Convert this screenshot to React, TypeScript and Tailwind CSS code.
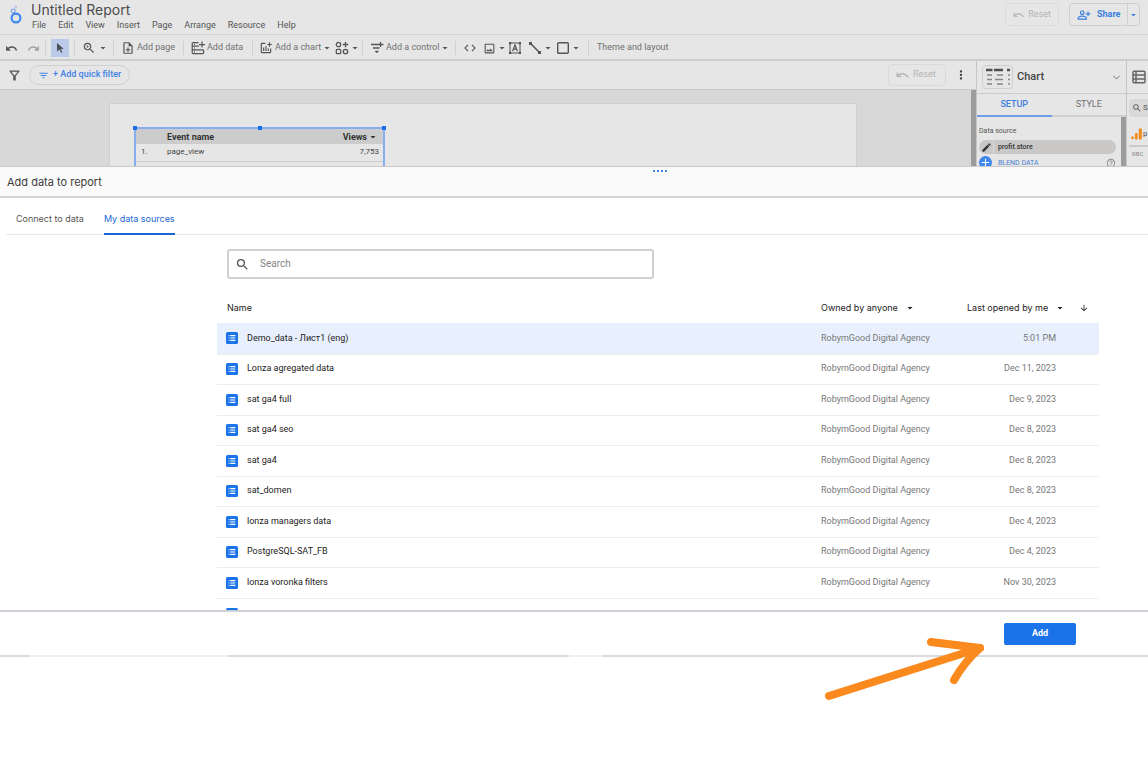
import React, { useState } from 'react';
import {
  MdAdd,
  MdArrowDownward,
  MdArrowDropDown,
  MdCode,
  MdEdit,
  MdFilterList,
  MdHelpOutline,
  MdMoreVert,
  MdOutlineAddchart,
  MdOutlineFilterAlt,
  MdOutlineImage,
  MdOutlineNoteAdd,
  MdOutlinePersonAddAlt,
  MdRedo,
  MdSearch,
  MdUndo,
  MdZoomIn,
} from 'react-icons/md';
import { ChevronDown } from 'lucide-react';

const menuItems = ['File', 'Edit', 'View', 'Insert', 'Page', 'Arrange', 'Resource', 'Help'];

const dataSources = [
  { name: 'Demo_data - Лист1 (eng)', opened: '5:01 PM' },
  { name: 'Lonza agregated data', opened: 'Dec 11, 2023' },
  { name: 'sat ga4 full', opened: 'Dec 9, 2023' },
  { name: 'sat ga4 seo', opened: 'Dec 8, 2023' },
  { name: 'sat ga4', opened: 'Dec 8, 2023' },
  { name: 'sat_domen', opened: 'Dec 8, 2023' },
  { name: 'lonza managers data', opened: 'Dec 4, 2023' },
  { name: 'PostgreSQL-SAT_FB', opened: 'Dec 4, 2023' },
  { name: 'lonza voronka filters', opened: 'Nov 30, 2023' },
];

const Logo = () => (
  <svg className="w-4 h-5" viewBox="0 0 16 20" fill="none" stroke="#3f86f0">
    <circle cx="9" cy="14" r="4.4" strokeWidth="2.2" />
    <circle cx="6.2" cy="7" r="1.9" strokeWidth="1.2" stroke="#7fa6e8" />
    <circle cx="8.6" cy="3.2" r="1" strokeWidth="0.9" stroke="#9fb8e6" />
    <path d="M6.8 8.8l.8 1.4" strokeWidth="1.4" />
  </svg>
);

const AddDataIcon = () => (
  <svg className="w-[14px] h-[14px]" viewBox="0 0 14 14" fill="none" stroke="currentColor" strokeWidth="1.2">
    <path d="M7.5 1.6H2.2a1 1 0 0 0-1 1v9a1 1 0 0 0 1 1h9.4a1 1 0 0 0 1-1V8.9M1.2 5.2h6.6M1.2 8.9h11.4M11 .6v6M8 3.6h6" />
    <path d="M3 3.4h1M3 7h1M3 10.8h1" />
  </svg>
);

const CommunityIcon = () => (
  <svg className="w-[14px] h-[14px]" viewBox="0 0 14 14" fill="none" stroke="currentColor" strokeWidth="1.3">
    <circle cx="3.5" cy="3.5" r="2.2" />
    <path d="M10.500 .8v5.400M7.800 3.500h5.400" />
    <rect x="1.300" y="8.300" width="4.400" height="4.400" rx="1" />
    <circle cx="10.5" cy="10.5" r="2.2" />
  </svg>
);

const ControlIcon = () => (
  <svg className="w-[14px] h-[14px]" viewBox="0 0 14 14" fill="none" stroke="currentColor" strokeWidth="1.3">
    <path d="M1 3.500h7M3 7h6.500M10.500 1v5M8 3.5h5.5" />
    <path d="M5 10h3.600L6.800 12z" fill="currentColor" strokeWidth="0.5" />
  </svg>
);

const TextIcon = () => (
  <svg className="w-[14px] h-[14px]" viewBox="0 0 14 14" fill="none" stroke="currentColor">
    <rect x="2" y="2" width="10" height="10" strokeWidth="1" />
    <path d="M4.6 10.2L7 4l2.4 6.2M5.4 8.2h3.2" strokeWidth="1.2" />
    <path d="M1 1h2.2v2.2H1zM10.8 1H13v2.2h-2.2zM1 10.8h2.2V13H1zM10.8 10.8H13V13h-2.2z" fill="currentColor" stroke="none" />
  </svg>
);

const LineIcon = () => (
  <svg className="w-[14px] h-[14px]" viewBox="0 0 14 14" stroke="currentColor" fill="currentColor">
    <path d="M2.5 2.5l9 9" strokeWidth="1.6" />
    <path d="M1 1h3v3H1zM10 10h3v3h-3z" stroke="none" />
  </svg>
);

const SquareIcon = () => (
  <svg className="w-[14px] h-[14px]" viewBox="0 0 14 14" fill="none" stroke="currentColor" strokeWidth="1.4">
    <rect x="1.7" y="1.7" width="10.6" height="10.6" rx="1" />
  </svg>
);

const PointerIcon = () => (
  <svg className="w-2 h-[10px]" viewBox="0 0 8 10" fill="#4a4f57">
    <path d="M1 0l6.6 5.8-2.9.2 1.6 3.2-1.2.6-1.6-3.3L1 8.4z" />
  </svg>
);

const ResetIcon = () => (
  <svg className="w-[13px] h-[10px]" viewBox="0 0 13 10" fill="none" stroke="currentColor" strokeWidth="1.3">
    <path d="M1.2 2.4v4h4M1.6 6C4 3 9.500 2.600 12 7.400" />
  </svg>
);

const TableThumb = () => (
  <svg className="w-6 h-[18px]" viewBox="0 0 24 18" fill="none" stroke="#858585" strokeWidth="1.4">
    <path d="M0 2h6.500M8 2h9M21 2h3" stroke="#4f4f4f" strokeWidth="2.600" />
    <path d="M1 7h5M11 7h6M22 7h2M1 11.500h5M9 11.500h8M22 11.500h2M1 16h5M11 16h6M22 16h2" />
  </svg>
);

const FieldsIcon = () => (
  <svg className="w-[14px] h-[14px] shrink-0" viewBox="0 0 14 14" fill="none" stroke="#666" strokeWidth="1.500">
    <rect x="1" y="1.200" width="12" height="11.600" rx="1" />
    <path d="M1 5h12M1 9h12M4 1v12" />
  </svg>
);

const AnalyticsIcon = () => (
  <svg className="w-[11px] h-3 shrink-0" viewBox="0 0 12 12" fill="#f28a1c">
    <circle cx="1.700" cy="10.200" r="1.600" />
    <rect x="4.300" y="5" width="3" height="7" rx="1" />
    <rect x="8.500" y="0" width="3.300" height="12" rx="1" />
  </svg>
);

const SourceIcon = () => (
  <svg className="w-3 h-3" viewBox="0 0 12 12">
    <rect width="12" height="12" rx="1.500" fill="#1a73e8" />
    <path d="M4.300 3.600h5M4.300 6h5M4.300 8.400h5" stroke="#fff" strokeWidth="1.100" />
    <path d="M2.500 3.600h1M2.500 6h1M2.500 8.400h1" stroke="#cfe0fb" strokeWidth="1.100" />
  </svg>
);

const Separator = () => <span className="w-px h-[14px] bg-[#cfcfcf] shrink-0" />;

const Caret = () => <MdArrowDropDown className="w-3 h-3 shrink-0" />;

interface ToolProps {
  label: string;
  className: string;
  showLabel?: boolean;
  caret?: boolean;
  children: React.ReactNode;
}

const Tool: React.FC<ToolProps> = ({ label, className, showLabel, caret, children }) => (
  <button type="button" aria-label={label} className={`flex items-center shrink-0 whitespace-nowrap ${className}`}>
    {children}
    {showLabel && <span className="ml-[2px]">{label}</span>}
    {caret && <Caret />}
  </button>
);

const Toolbar = () => (
  <div className="flex items-center h-[26px] pt-[2px] border-b-2 border-[#cbcccd] text-[9px] text-[#707070] [&_svg]:text-[#555]">
    <Tool label="Undo" className="w-[22px] justify-center"><MdUndo className="w-[13px] h-[13px]" /></Tool>
    <Tool label="Redo" className="w-[23px] justify-center opacity-45"><MdRedo className="w-[13px] h-[13px]" /></Tool>
    <Separator />
    <Tool label="Select" className="w-[18px] h-[18px] justify-center bg-[#b9cbe8] mx-[5px]"><PointerIcon /></Tool>
    <Separator />
    <Tool label="Zoom" className="w-[38px] pl-[7px] gap-px" caret><MdZoomIn className="w-[14px] h-[14px]" /></Tool>
    <Separator />
    <Tool label="Add page" className="w-[69px] pl-[7px]" showLabel><MdOutlineNoteAdd className="w-[14px] h-[14px]" /></Tool>
    <Separator />
    <Tool label="Add data" className="w-[68px] pl-[7px]" showLabel><AddDataIcon /></Tool>
    <Separator />
    <Tool label="Add a chart" className="w-[82px] pl-[6px]" showLabel caret><MdOutlineAddchart className="w-[14px] h-[14px]" /></Tool>
    <Tool label="Community visualizations" className="w-[27px]" caret><CommunityIcon /></Tool>
    <Separator />
    <Tool label="Add a control" className="w-[92px] pl-[7px]" showLabel caret><ControlIcon /></Tool>
    <Separator />
    <Tool label="Embed URL" className="w-[27px] pl-[7px]"><MdCode className="w-[14px] h-[14px]" /></Tool>
    <Tool label="Image" className="w-[25px]" caret><MdOutlineImage className="w-[15px] h-[15px]" /></Tool>
    <Tool label="Text" className="w-[20px]"><TextIcon /></Tool>
    <Tool label="Line" className="w-[28px]" caret><LineIcon /></Tool>
    <Tool label="Shape" className="w-[32px]" caret><SquareIcon /></Tool>
    <Separator />
    <button type="button" className="ml-2 whitespace-nowrap">Theme and layout</button>
  </div>
);

const ReportHeader = () => (
  <header className="flex h-[35px] border-b border-[#d3d3d3]">
    <div className="w-[31px] pl-[7px] pt-1 shrink-0"><Logo /></div>
    <div className="flex-1">
      <h1 className="h-[19px] text-[14px] leading-[19px] text-[#4c4c4c] font-[Inter,sans-serif]">Untitled Report</h1>
      <nav className="flex gap-3 pl-px text-[9px] leading-3 text-[#555]">
        {menuItems.map((item) => (
          <button type="button" key={item}>{item}</button>
        ))}
      </nav>
    </div>
    <div className="flex items-start gap-[10px] pt-[3px] pr-2">
      <button type="button" className="flex items-center gap-[4px] w-[54px] h-[23px] px-[7px] border border-[#dcdcdc] rounded text-[9px] text-[#b4b4b4]">
        <ResetIcon />Reset
      </button>
      <div className="flex h-[23px] border border-[#cfcfcf] rounded text-[#3b7de0]">
        <button type="button" className="flex items-center gap-[6px] w-[57px] pl-[7px] text-[9px] font-bold">
          <MdOutlinePersonAddAlt className="w-[14px] h-[14px]" />Share
        </button>
        <button type="button" aria-label="Share options" className="w-[12px] border-l border-[#cfcfcf]">
          <MdArrowDropDown className="w-[11px] h-3" />
        </button>
      </div>
    </div>
  </header>
);

const handle = 'absolute w-1 h-1 bg-[#1a6fe8]';

const ReportCanvas = () => (
  <div className="flex-1 min-w-0 flex flex-col">
    <div className="flex items-center h-[29px] shrink-0 border-b border-[#c9c9c9]">
      <button type="button" aria-label="Filters" className="w-[29px] flex justify-center text-[#555] shrink-0">
        <MdOutlineFilterAlt className="w-[15px] h-[15px]" />
      </button>
      <button type="button" className="flex items-center gap-[4px] h-5 px-2 border border-[#d0d0d0] rounded-full text-[9px] font-medium text-[#3f82e6] whitespace-nowrap">
        <MdFilterList className="w-[11px] h-[11px]" />+ Add quick filter
      </button>
      <button type="button" className="ml-auto flex items-center gap-[4px] w-[58px] h-[22px] px-[7px] border border-[#dadada] rounded text-[9px] text-[#b4b4b4]">
        <ResetIcon />Reset
      </button>
      <button type="button" aria-label="More options" className="w-[30px] flex justify-center text-[#444]">
        <MdMoreVert className="w-[14px] h-[14px]" />
      </button>
    </div>
    <div className="flex flex-1 bg-[#d8d8d8]">
      <div className="flex-1 ml-[109px] mr-[114px] mt-[13px] bg-[#e6e6e6] border-x border-t border-[#cfcfcf]">
        <div className="relative mt-[23px] ml-6 w-[251px] h-[39px] border-2 border-b-0 border-[#86aeec]">
          <span className={`${handle} -left-[3px] -top-[3px]`} />
          <span className={`${handle} left-[122px] -top-[3px]`} />
          <span className={`${handle} -right-[3px] -top-[3px]`} />
          <table className="w-full text-[8px] text-[#444]">
            <thead>
              <tr className="h-[15px] bg-[#cccccc] font-bold text-[#333]">
                <td className="w-[31px]" />
                <th className="text-left text-[9px] leading-3">Event name</th>
                <th className="text-[9px] leading-3 pr-1">
                  <span className="flex items-center justify-end">Views<Caret /></span>
                </th>
              </tr>
            </thead>
            <tbody>
              <tr className="h-[17px] border-b border-[#cfcfcf]">
                <td className="pl-[5px]">1.</td>
                <td>page_view</td>
                <td className="text-right pr-[4px]">7,753</td>
              </tr>
            </tbody>
          </table>
        </div>
      </div>
      <div className="w-[5px] bg-[#9c9c9c]" />
    </div>
  </div>
);

const PropertiesPanel = () => (
  <aside className="flex flex-col w-[150px] shrink-0 border-l border-[#c6c6c6]">
    <button type="button" className="flex items-center h-[33px] shrink-0 pl-[5px] pr-[4px] border-b border-[#cbcbcb] text-[11px] font-medium text-[#444]">
      <span className="flex items-center justify-center w-[31px] h-6 mr-1 border border-[#cfcfcf] rounded"><TableThumb /></span>
      Chart
      <ChevronDown className="w-[11px] h-[11px] ml-auto text-[#666]" />
    </button>
    <div className="flex shrink-0 text-[9px] leading-[21px] text-[#707070]">
      <button type="button" className="flex-1 border-b-2 border-[#6f9ee8] text-[#3f7fdc] font-medium">SETUP</button>
      <button type="button" className="flex-1 border-b-2 border-[#cfcfcf]">STYLE</button>
    </div>
    <div className="flex flex-1">
      <div className="flex-1 pl-[2px] pt-[9px]">
        <p className="text-[7px] leading-[11px] text-[#555]">Data source</p>
        <div className="flex items-center h-[14px] mt-[3px] mr-[5px] rounded-full bg-[#c9c8c6] text-[7px] font-medium text-[#333]">
          <span className="flex items-center justify-center w-[15px] h-full mr-1 border-r border-[#dadada]"><MdEdit className="w-[11px] h-[11px]" /></span>
          profit.store
        </div>
        <div className="flex items-center mt-[2px] pr-[5px] text-[7px] leading-3 text-[#4d83d6]">
          <MdAdd className="w-[13px] h-[13px] mr-[6px] rounded-full bg-[#3f86ec] text-white" />
          BLEND DATA
          <MdHelpOutline className="w-[10px] h-[10px] ml-auto text-[#888]" />
        </div>
      </div>
      <div className="w-[5px] bg-[#9c9c9c]" />
    </div>
  </aside>
);

const DataPanel = () => (
  <aside className="w-[22px] shrink-0 border-l border-[#c6c6c6] overflow-hidden text-[8px] text-[#555]">
    <div className="flex items-center h-[33px] pl-[5px] border-b border-[#cbcbcb]"><FieldsIcon /></div>
    <div className="flex items-center gap-px h-[18px] mt-[5px] ml-[2px] pl-[3px] rounded-l bg-[#d9d9d9]">
      <MdSearch className="w-[10px] h-[10px] shrink-0" />S
    </div>
    <div className="flex items-center gap-px h-[30px] ml-[2px] pl-[2px] pt-[5px] border-b-2 border-[#cbcbcb]"><AnalyticsIcon />p</div>
    <p className="pl-[5px] text-[6px] leading-[14px] text-[#888]">RBC</p>
  </aside>
);

const SourceTable = () => {
  const [selected, setSelected] = useState(0);

  return (
    <table className="w-full table-fixed border-collapse text-left text-[9px]">
      <colgroup>
        <col />
        <col className="w-[118px]" />
        <col className="w-[117px]" />
        <col className="w-[43px]" />
      </colgroup>
      <thead>
        <tr className="h-[31px] text-[#222] font-[Inter,sans-serif]">
          <th className="font-normal pl-[10px]">Name</th>
          <th className="font-normal">
            <button type="button" className="flex items-center gap-[6px] whitespace-nowrap">Owned by anyone<Caret /></button>
          </th>
          <th className="font-normal pl-7" colSpan={2}>
            <button type="button" className="flex items-center gap-[6px] whitespace-nowrap">
              Last opened by me<Caret />
              <MdArrowDownward className="w-[10px] h-[10px] ml-[7px]" />
            </button>
          </th>
        </tr>
      </thead>
      <tbody>
        {dataSources.map((source, index) => (
          <tr
            key={source.name}
            onClick={() => setSelected(index)}
            className={`odd:h-[31px] even:h-[30px] border-b border-[#ececec] cursor-pointer ${index === selected ? 'bg-[#e8f0fe]' : ''}`}
          >
            <td className="pl-[9px] text-[#222]">
              <span className="flex items-center gap-[9px]"><SourceIcon />{source.name}</span>
            </td>
            <td className="text-[#777] whitespace-nowrap">RobymGood Digital Agency</td>
            <td className="text-right text-[#777]">{source.opened}</td>
            <td />
          </tr>
        ))}
      </tbody>
    </table>
  );
};

const AddDataPanel = () => (
  <section className="relative bg-white">
    {/* Drag handle for resizing the panel */}
    <div className="absolute left-[653px] top-[3px] flex gap-[2px]">
      <span className="w-[2px] h-[2px] bg-[#3f82e6]" />
      <span className="w-[2px] h-[2px] bg-[#3f82e6]" />
      <span className="w-[2px] h-[2px] bg-[#3f82e6]" />
      <span className="w-[2px] h-[2px] bg-[#3f82e6]" />
    </div>
    <h2 className="h-[31px] pl-[7px] bg-[#fafafa] border-b-2 border-[#d3d4d8] text-[11px] leading-[31px] text-[#3c3c3c] font-[Inter,sans-serif]">Add data to report</h2>

    <div className="flex items-start h-[37px] ml-[6px] pl-[10px] gap-5 border-b border-[#e6e6e6] text-[9px] leading-[41px] text-[#555] font-[Inter,sans-serif]">
      <button type="button">Connect to data</button>
      <button type="button" className="h-[37px] border-b-2 border-[#1967d2] text-[#1967d2]">My data sources</button>
    </div>

    <div className="h-[375px] ml-[217px] mr-[49px] pt-[14px] overflow-hidden">
      <label className="flex items-center w-[427px] h-[30px] ml-[10px] mb-[13px] pl-[6px] border-2 border-[#d0d0d0] rounded-[3px]">
        <MdSearch className="w-[15px] h-[15px] text-[#555]" />
        <input type="text" aria-label="Search" placeholder="Search" className="flex-1 ml-[10px] pb-[2px] text-[10px] outline-none placeholder:text-[#858585]" />
      </label>
      <SourceTable />
      <div className="pl-[9px] pt-[9px]"><SourceIcon /></div>
    </div>

    <footer className="relative border-t-2 border-[#d0d1d8]">
      <div className="flex justify-end items-center h-[43px] pr-[72px]">
        <button type="button" className="w-[72px] h-[22px] rounded-[2px] bg-[#1a73e8] text-[9px] font-bold text-white">Add</button>
      </div>
      <div className="flex h-[2px] bg-[#dcdcdc]">
        <span className="w-[30px]" />
        <span className="w-[198px] bg-[#f1f1f1]" />
        <span className="w-[341px]" />
        <span className="w-[33px] bg-[#f1f1f1]" />
      </div>
      <svg className="absolute right-[158px] top-[23px] w-[170px] h-[70px]" viewBox="820 635 170 70" fill="none" stroke="#fa8a1e" strokeWidth="8" strokeLinecap="round" strokeLinejoin="round">
        <path d="M829 696Q905 672 980 648" />
        <path d="M931 642L980 648Q965 661 954 680" />
      </svg>
    </footer>
  </section>
);

const App = () => (
  <main className="min-h-screen bg-white font-[Roboto,sans-serif]">
    <div className="bg-[#e6e6e6]">
      <ReportHeader />
      <Toolbar />
      <div className="flex h-[106px] overflow-hidden border-b border-[#c9c9c9]">
        <ReportCanvas />
        <PropertiesPanel />
        <DataPanel />
      </div>
    </div>
    <AddDataPanel />
  </main>
);

export default App;
